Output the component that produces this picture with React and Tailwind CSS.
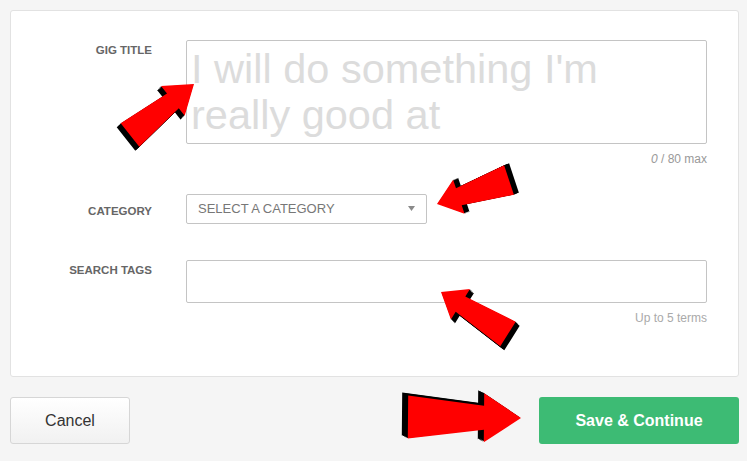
import React from "react";

// red "look here" arrows drawn over the form
const arrows = [
  { tip: [194, 84], tail: [130, 135], tw: 30, nw: 19, hw: 38, hl: 27, off: [-4, 4] },
  { tip: [437, 204], tail: [509, 180], tw: 31, nw: 18, hw: 36, hl: 23, off: [5, -2] },
  { tip: [441, 292], tail: [508, 334], tw: 29, nw: 18, hw: 36, hl: 23, off: [4, 4] },
  { tip: [521, 418], tail: [408, 417], tw: 43, nw: 24, hw: 49, hl: 37, off: [-6, -3] },
];

const arrowPoints = ({ tip, tail, tw, nw, hw, hl }) => {
  const dx = tip[0] - tail[0];
  const dy = tip[1] - tail[1];
  const len = Math.hypot(dx, dy);
  const ux = dx / len;
  const uy = dy / len;
  const nx = -uy;
  const ny = ux;
  const bx = tip[0] - ux * hl;
  const by = tip[1] - uy * hl;
  const side = (x, y, s, w) => [x + (nx * s * w) / 2, y + (ny * s * w) / 2];
  return [
    side(tail[0], tail[1], 1, tw),
    side(bx, by, 1, nw),
    side(bx, by, 1, hw),
    tip,
    side(bx, by, -1, hw),
    side(bx, by, -1, nw),
    side(tail[0], tail[1], -1, tw),
  ];
};

const toStr = (pts, ox = 0, oy = 0) =>
  pts.map(([x, y]) => `${(x + ox).toFixed(1)},${(y + oy).toFixed(1)}`).join(" ");

const Arrow = ({ a }) => {
  const pts = arrowPoints(a);
  const steps = [1, 0.8, 0.6, 0.4, 0.2];
  return (
    <g>
      {steps.map((k) => (
        <polygon key={k} points={toStr(pts, a.off[0] * k, a.off[1] * k)} fill="#000" />
      ))}
      <polygon points={toStr(pts)} fill="#ff0000" />
    </g>
  );
};

export default function App() {
  return (
    <div className="relative w-[747px] h-[461px] overflow-hidden bg-[#f5f5f5] pt-[10px] pl-[10px] font-['Liberation_Sans',Arial,sans-serif]">
      {/* Form card */}
      <div className="w-[729px] h-[367px] bg-white border border-[#e2e2e2] rounded-[3px] pt-[29px]">
        {/* Gig title */}
        <div className="flex">
          <label className="w-[141px] text-right pt-[3px] text-[11.5px] leading-[14px] font-bold text-[#666]">
            GIG TITLE
          </label>
          <div className="ml-[34px] w-[521px]">
            <textarea
              className="block w-full h-[104px] resize-none border border-[#c4c4c4] rounded-[2px] pl-[4px] pt-[5px] text-[41.5px] leading-[46px] text-[#333] placeholder:text-[#dcdcdc] outline-none"
              placeholder={"I will do something I'm\nreally good at"}
            />
            <p className="mt-[8px] text-right text-[12px] leading-[14px] text-[#999]">
              <span className="italic">0</span> / 80 max
            </p>
          </div>
        </div>

        {/* Category */}
        <div className="flex items-center mt-[28px]">
          <label className="w-[141px] text-right pt-[3px] text-[11.5px] leading-[14px] font-bold text-[#666]">
            CATEGORY
          </label>
          <div className="ml-[34px] w-[241px] h-[30px] flex items-center justify-between border border-[#c4c4c4] rounded-[2px] pl-[11px] pr-[11px]">
            <span className="text-[13px] text-[#777]">SELECT A CATEGORY</span>
            <svg width="7" height="5" viewBox="0 0 7 5" className="-mt-[2px]">
              <polygon points="0,0 7,0 3.5,5" fill="#8a8a8a" />
            </svg>
          </div>
        </div>

        {/* Search tags */}
        <div className="flex mt-[36px]">
          <label className="w-[141px] text-right pt-[3px] text-[11.5px] leading-[14px] font-bold text-[#666]">
            SEARCH TAGS
          </label>
          <div className="ml-[34px] w-[521px]">
            <input
              type="text"
              className="block w-full h-[43px] border border-[#c4c4c4] rounded-[2px] px-[8px] text-[14px] outline-none"
            />
            <p className="mt-[8px] text-right text-[12px] leading-[14px] text-[#aaa]">
              Up to 5 terms
            </p>
          </div>
        </div>
      </div>

      {/* Actions */}
      <div className="mt-[20px] w-[729px] flex justify-between">
        <button className="w-[120px] h-[47px] rounded-[3px] border border-[#d6d6d6] bg-gradient-to-b from-white to-[#f1f1f1] text-[16px] text-[#333]">
          Cancel
        </button>
        <button className="w-[200px] h-[47px] rounded-[3px] bg-[#3dbb74] text-[16px] font-bold text-white">
          Save &amp; Continue
        </button>
      </div>

      {/* Arrow overlay */}
      <svg
        className="absolute inset-0 pointer-events-none"
        width="747"
        height="461"
        viewBox="0 0 747 461"
      >
        {arrows.map((a, i) => (
          <Arrow key={i} a={a} />
        ))}
      </svg>
    </div>
  );
}
